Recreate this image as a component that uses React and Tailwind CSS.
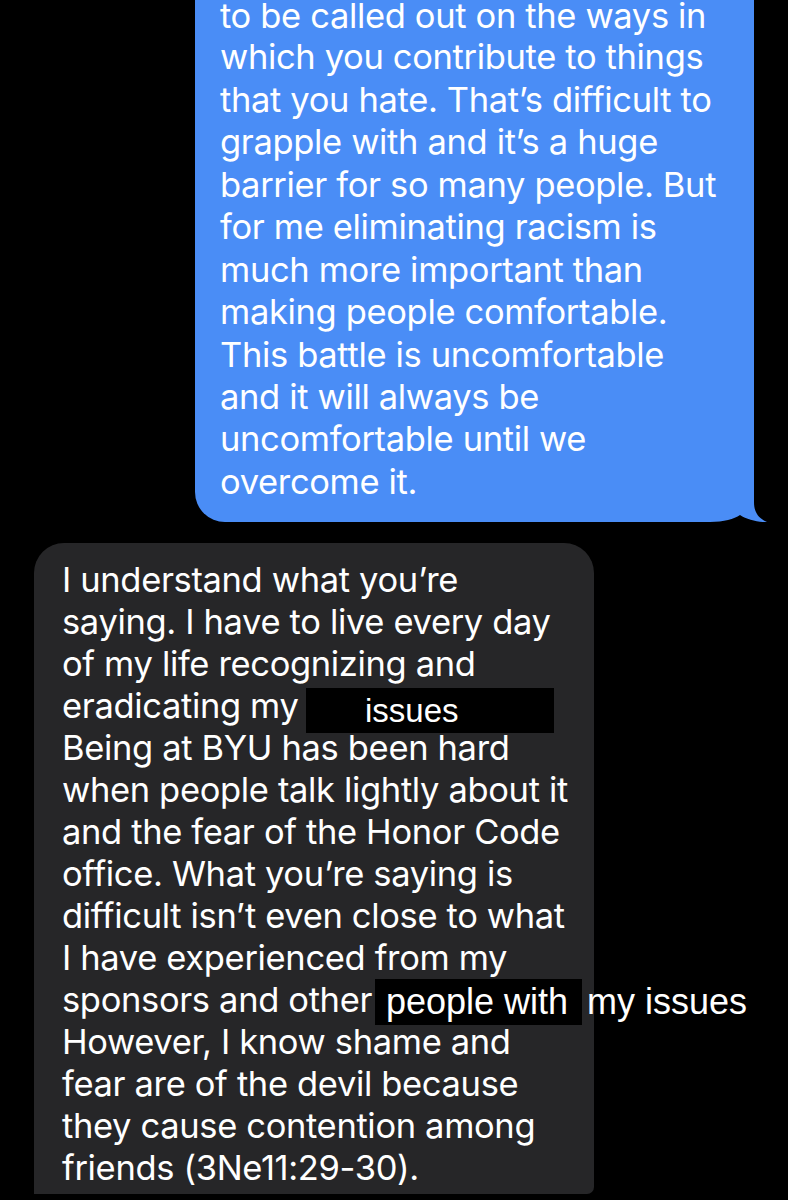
import React from 'react';

const blueLines = [
  'to be called out on the ways in',
  'which you contribute to things',
  'that you hate. That’s difficult to',
  'grapple with and it’s a huge',
  'barrier for so many people. But',
  'for me eliminating racism is',
  'much more important than',
  'making people comfortable.',
  'This battle is uncomfortable',
  'and it will always be',
  'uncomfortable until we',
  'overcome it.',
];

const greyLines = [
  'I understand what you’re',
  'saying. I have to live every day',
  'of my life recognizing and',
  'eradicating my',
  'Being at BYU has been hard',
  'when people talk lightly about it',
  'and the fear of the Honor Code',
  'office. What you’re saying is',
  'difficult isn’t even close to what',
  'I have experienced from my',
  'sponsors and other',
  'However, I know shame and',
  'fear are of the devil because',
  'they cause contention among',
  'friends (3Ne11:29-30).',
];

const Tail = () => (
  <svg className="absolute right-[-14px] bottom-0" width="70" height="34" viewBox="0 0 70 34">
    <rect x="0" y="0" width="70" height="34" fill="#000" />
    <path d="M0 0 H56 V14 C56 24 60 30 69 34 C60 34.5 49 31.5 42 27 C36 31 26 34 12 34 H0 Z" fill="#4a8df6" />
  </svg>
);

const App = () => {
  return (
    <div className="flex flex-col h-[1200px] w-[788px] overflow-hidden bg-black font-[Inter,sans-serif] text-white text-[34.5px] tracking-[-0.01em]">
      <div className="relative ml-[195px] w-[559px] bg-[#4a8df6] rounded-bl-[30px] pl-[25px] pb-[19px] leading-[42.45px]">
        {blueLines.map((line, i) => (
          <div key={i} className={i === 0 ? 'whitespace-nowrap leading-[32px] mb-[4.4px]' : 'whitespace-nowrap'}>
            {line}
          </div>
        ))}
        <Tail />
      </div>

      <div className="mt-[21px] ml-[34px] w-[560px] bg-[#262628] rounded-t-[30px] rounded-br-[7px] pl-[28px] pt-[16px] pb-[5px] leading-[42px]">
        {greyLines.map((line, i) => (
          <div key={i} className="relative whitespace-nowrap">
            {line}
            {i === 3 && (
              <span className="absolute left-[244px] top-[3px] w-[248px] h-[45px] bg-black pl-[59px] font-['Liberation_Sans',Arial,sans-serif] text-[33px] leading-[45px] tracking-normal">
                issues
              </span>
            )}
            {i === 10 && (
              <>
                <span className="absolute left-[313px] top-0 w-[207px] h-[46px] bg-black pl-[11px] font-['Liberation_Sans',Arial,sans-serif] text-[36px] leading-[46px] tracking-normal">
                  people with
                </span>
                <span className="absolute left-[525px] top-0 h-[46px] font-['Liberation_Sans',Arial,sans-serif] text-[36px] leading-[46px] tracking-normal">
                  my issues
                </span>
              </>
            )}
          </div>
        ))}
      </div>
    </div>
  );
};

export default App;
